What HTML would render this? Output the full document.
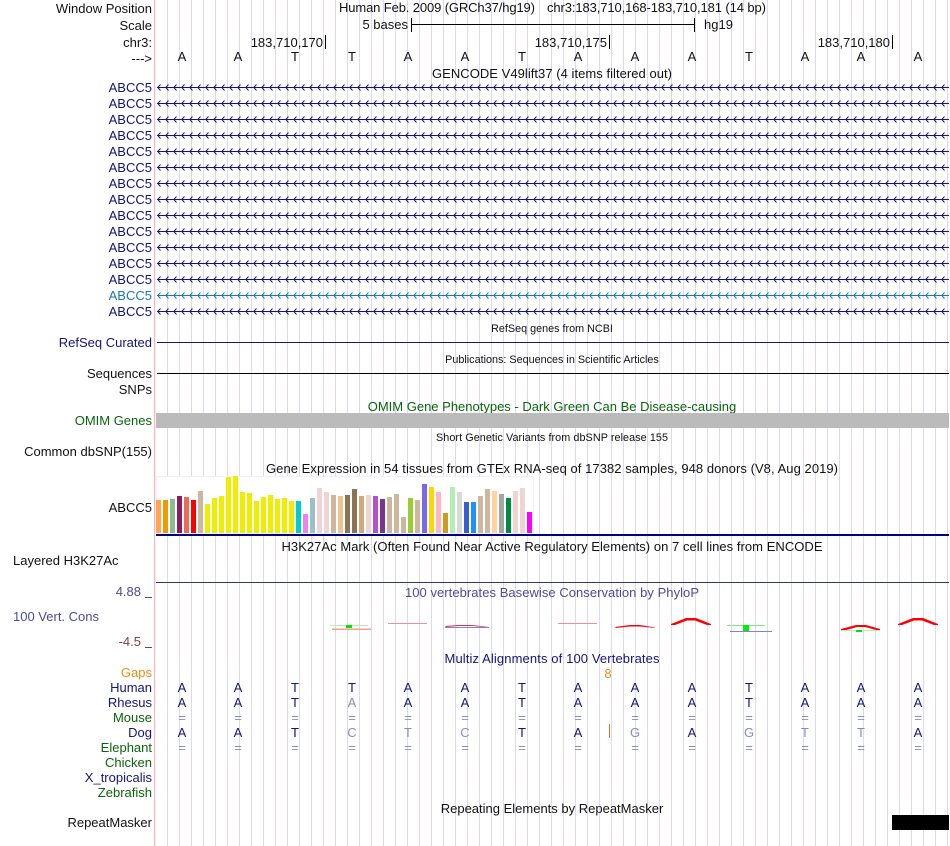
<!DOCTYPE html>
<html><head><meta charset="utf-8"><style>
html,body{margin:0;padding:0;background:#fff;width:950px;height:846px;overflow:hidden}
svg{display:block;font-family:"Liberation Sans",sans-serif;font-size:13px}
.r{text-anchor:end}.m{text-anchor:middle}
.n{fill:#14147f}.g{fill:#0a640a}.k{fill:#111}
.s{font-size:10.8px}
.b text{text-anchor:middle}
.l{fill:#8a8ac2}
.p{fill:#4b4b99}
</style></head><body>
<svg width="950" height="846" viewBox="0 0 950 846" xmlns="http://www.w3.org/2000/svg">
<defs>
<pattern id="arN" x="157" y="84" width="8" height="16" patternUnits="userSpaceOnUse"><path d="M3.5 0.5L0.8 3.5L3.5 6.5" fill="none" stroke="#14147f" stroke-width="1"/></pattern>
<pattern id="arB" x="157" y="292" width="8" height="16" patternUnits="userSpaceOnUse"><path d="M3.5 0.5L0.8 3.5L3.5 6.5" fill="none" stroke="#1a78b4" stroke-width="1"/></pattern>
</defs>
<line x1="167" x2="950" y1="423" y2="423" stroke="#d9d9f8" stroke-width="846" stroke-dasharray="1 11"/>
<rect x="154" width="1" height="846" fill="#ffb0b0"/>

<g class="k">
<text x="152" y="13" class="r">Window Position</text>
<text x="152" y="30" class="r">Scale</text>
<text x="152" y="47" class="r">chr3:</text>
<text x="152" y="63" class="r">---&gt;</text>
<text x="339" y="12" textLength="196">Human Feb. 2009 (GRCh37/hg19)</text>
<text x="547" y="12" textLength="219">chr3:183,710,168-183,710,181 (14 bp)</text>
<text x="408" y="29" class="r">5 bases</text>
<text x="704" y="29">hg19</text>
<text x="323" y="47" class="r">183,710,170</text>
<text x="607" y="47" class="r">183,710,175</text>
<text x="890" y="47" class="r">183,710,180</text>
<text x="552" y="78" class="m" textLength="240">GENCODE V49lift37 (4 items filtered out)</text>
</g>
<g fill="#000">
<rect x="411" y="18" width="1" height="14"/><rect x="412" y="24" width="282" height="1"/><rect x="694" y="18" width="1" height="14"/>
<rect x="325" y="35" width="1" height="14"/><rect x="609" y="35" width="1" height="14"/><rect x="892" y="35" width="1" height="14"/>
</g>
<g class="b k">
<text x="182" y="61">A</text><text x="238" y="61">A</text><text x="295" y="61">T</text><text x="352" y="61">T</text><text x="408" y="61">A</text><text x="465" y="61">A</text><text x="522" y="61">T</text><text x="578" y="61">A</text><text x="635" y="61">A</text><text x="692" y="61">A</text><text x="749" y="61">T</text><text x="805" y="61">A</text><text x="861" y="61">A</text><text x="918" y="61">A</text>
</g>

<g class="n">
<text x="152" y="92" class="r">ABCC5</text><text x="152" y="108" class="r">ABCC5</text><text x="152" y="124" class="r">ABCC5</text><text x="152" y="140" class="r">ABCC5</text><text x="152" y="156" class="r">ABCC5</text><text x="152" y="172" class="r">ABCC5</text><text x="152" y="188" class="r">ABCC5</text><text x="152" y="204" class="r">ABCC5</text><text x="152" y="220" class="r">ABCC5</text><text x="152" y="236" class="r">ABCC5</text><text x="152" y="252" class="r">ABCC5</text><text x="152" y="268" class="r">ABCC5</text><text x="152" y="284" class="r">ABCC5</text>
<text x="152" y="316" class="r">ABCC5</text>
</g>
<text x="152" y="300" class="r" fill="#1a78b4">ABCC5</text>

<rect x="157" y="84" width="792" height="208" fill="url(#arN)"/>
<rect x="157" y="308" width="792" height="7" fill="url(#arN)"/>
<rect x="157" y="292" width="792" height="7" fill="url(#arB)"/>
<g fill="#14147f">
<rect x="157" y="87" width="792" height="1"/><rect x="157" y="103" width="792" height="1"/><rect x="157" y="119" width="792" height="1"/><rect x="157" y="135" width="792" height="1"/><rect x="157" y="151" width="792" height="1"/><rect x="157" y="167" width="792" height="1"/><rect x="157" y="183" width="792" height="1"/><rect x="157" y="199" width="792" height="1"/><rect x="157" y="215" width="792" height="1"/><rect x="157" y="231" width="792" height="1"/><rect x="157" y="247" width="792" height="1"/><rect x="157" y="263" width="792" height="1"/><rect x="157" y="279" width="792" height="1"/><rect x="157" y="311" width="792" height="1"/>
</g>
<rect x="157" y="295" width="792" height="1" fill="#1a78b4"/>

<text x="552" y="332" class="m s k">RefSeq genes from NCBI</text>
<text x="152" y="347" class="r n">RefSeq Curated</text>
<rect x="157" y="342" width="792" height="1" fill="#14147f"/>
<text x="552" y="363" class="m s k">Publications: Sequences in Scientific Articles</text>
<text x="152" y="378" class="r k">Sequences</text>
<rect x="157" y="373" width="792" height="1" fill="#000"/>
<text x="152" y="394" class="r k">SNPs</text>
<text x="552" y="411" class="m g">OMIM Gene Phenotypes - Dark Green Can Be Disease-causing</text>
<text x="152" y="425" class="r g">OMIM Genes</text>
<rect x="156" y="413" width="793" height="15" fill="#bbb"/>
<text x="552" y="441" class="m s k" textLength="232">Short Genetic Variants from dbSNP release 155</text>
<text x="152" y="456" class="r k">Common dbSNP(155)</text>
<text x="552" y="473" class="m k" textLength="572">Gene Expression in 54 tissues from GTEx RNA-seq of 17382 samples, 948 donors (V8, Aug 2019)</text>
<text x="152" y="512" class="r k">ABCC5</text>

<rect x="156.5" y="476.5" width="377" height="57" fill="#fff" stroke="#efeff8"/>
<g>
<rect x="156" y="500" width="5" height="33" fill="#FFA54F"/><rect x="163" y="500" width="5" height="33" fill="#EE9A00"/><rect x="170" y="499" width="5" height="34" fill="#8FBC8F"/><rect x="177" y="496" width="5" height="37" fill="#8B1C62"/><rect x="184" y="497" width="5" height="36" fill="#EE6A50"/><rect x="191" y="500" width="5" height="33" fill="#FF0000"/><rect x="198" y="491" width="5" height="42" fill="#CDB79E"/>
<rect x="205" y="504" width="5" height="29" fill="#EEEE00"/><rect x="212" y="498" width="5" height="35" fill="#EEEE00"/><rect x="219" y="496" width="5" height="37" fill="#EEEE00"/><rect x="226" y="477" width="5" height="56" fill="#EEEE00"/><rect x="233" y="476" width="5" height="57" fill="#EEEE00"/><rect x="240" y="492" width="5" height="41" fill="#EEEE00"/><rect x="247" y="493" width="5" height="40" fill="#EEEE00"/><rect x="254" y="501" width="5" height="32" fill="#EEEE00"/><rect x="261" y="497" width="5" height="36" fill="#EEEE00"/><rect x="268" y="495" width="5" height="38" fill="#EEEE00"/><rect x="275" y="499" width="5" height="34" fill="#EEEE00"/><rect x="282" y="498" width="5" height="35" fill="#EEEE00"/><rect x="289" y="501" width="5" height="32" fill="#EEEE00"/>
<rect x="296" y="501" width="5" height="32" fill="#00CDCD"/><rect x="303" y="514" width="5" height="19" fill="#EE82EE"/><rect x="310" y="498" width="5" height="35" fill="#9AC0CD"/><rect x="317" y="488" width="5" height="45" fill="#EED5D2"/><rect x="324" y="492" width="5" height="41" fill="#EED5D2"/><rect x="331" y="495" width="5" height="38" fill="#CDB79E"/><rect x="338" y="496" width="5" height="37" fill="#EEC591"/><rect x="345" y="495" width="5" height="38" fill="#8B7355"/>
<rect x="352" y="489" width="5" height="44" fill="#8B7355"/><rect x="359" y="496" width="5" height="37" fill="#CDAA7D"/><rect x="366" y="495" width="5" height="38" fill="#EED5D2"/><rect x="373" y="496" width="5" height="37" fill="#B452CD"/><rect x="380" y="499" width="5" height="34" fill="#7D3390"/><rect x="387" y="497" width="5" height="36" fill="#CDB79E"/><rect x="394" y="494" width="5" height="39" fill="#CDB79E"/><rect x="401" y="517" width="5" height="16" fill="#CDB79E"/><rect x="408" y="498" width="5" height="35" fill="#9ACD32"/><rect x="415" y="500" width="5" height="33" fill="#CDB79E"/><rect x="422" y="484" width="5" height="49" fill="#7A67EE"/><rect x="429" y="487" width="5" height="46" fill="#FFD700"/><rect x="436" y="492" width="5" height="41" fill="#FFB6C1"/><rect x="443" y="513" width="5" height="20" fill="#CD9B1D"/><rect x="450" y="487" width="5" height="46" fill="#B4EEB4"/><rect x="457" y="492" width="5" height="41" fill="#D9D9D9"/><rect x="464" y="502" width="5" height="31" fill="#3A5FCD"/><rect x="471" y="502" width="5" height="31" fill="#1E90FF"/><rect x="478" y="496" width="5" height="37" fill="#CDB79E"/><rect x="485" y="489" width="5" height="44" fill="#CDB79E"/><rect x="492" y="491" width="5" height="42" fill="#FFD39B"/><rect x="499" y="494" width="5" height="39" fill="#A6A6A6"/><rect x="506" y="498" width="5" height="35" fill="#008B45"/><rect x="513" y="491" width="5" height="42" fill="#EED5D2"/><rect x="520" y="488" width="5" height="45" fill="#EED5D2"/><rect x="527" y="512" width="5" height="21" fill="#FF00FF"/>
</g>
<rect x="156" y="534" width="793" height="2" fill="#000080"/>

<text x="552" y="551" class="m k" textLength="541">H3K27Ac Mark (Often Found Near Active Regulatory Elements) on 7 cell lines from ENCODE</text>
<text x="13" y="565" class="k">Layered H3K27Ac</text>
<rect x="156" y="582" width="793" height="1" fill="#333366"/>

<text x="141" y="596" class="r p">4.88</text><rect x="145" y="597" width="7" height="1" fill="#4b4b99"/>
<text x="552" y="597" class="m p" textLength="294">100 vertebrates Basewise Conservation by PhyloP</text>
<text x="13" y="621" class="p">100 Vert. Cons</text>
<text x="141" y="646" class="r" fill="#8a3c3c">-4.5</text><rect x="145" y="647" width="7" height="1" fill="#8a3c3c"/>

<!-- phyloP -->
<rect x="330" y="625" width="38" height="1" fill="#b6f0b6"/><rect x="346" y="625" width="6" height="3" fill="#00e600"/><path d="M332 628.5H371V630H332Z" fill="#f4a08a"/>
<rect x="388" y="623" width="39" height="1" fill="#f09090"/>
<path d="M445 626L458 625H472L489 627V627.5L472 626H458L446 627Z" fill="#e83030"/><rect x="445" y="627" width="44" height="1" fill="#8080e0"/>
<rect x="558" y="623" width="39" height="1" fill="#f09090"/>
<path d="M615 627L630 625H640L655 627.5V628L640 626.5H630L616 628Z" fill="#f00"/>
<path d="M671 624L686 618H696L711 624V625H707L695 620.5H687L675 625H671Z" fill="#f00"/>
<rect x="727" y="625" width="38" height="1" fill="#7fe87f"/><rect x="743" y="625" width="6" height="6" fill="#00f000"/><rect x="730" y="631" width="42" height="1" fill="#8080e0"/>
<path d="M841 629L856 625H866L880 629V630H876L865 627H857L846 630H841Z" fill="#f00"/>
<rect x="841" y="630" width="39" height="1" fill="#b6f0b6"/><rect x="856" y="630" width="6" height="2" fill="#00e600"/>
<path d="M898 624L913 618H923L938 624V625H934L922 620.5H914L902 625H898Z" fill="#f00"/>

<text x="552" y="663" class="m n" textLength="215">Multiz Alignments of 100 Vertebrates</text>
<text x="152" y="677" class="r" fill="#f08c14">Gaps</text>
<text x="608" y="678" class="m" fill="#f08c14">8</text>
<rect x="609" y="724" width="1" height="14" fill="#d07818"/>
<g class="n"><text x="152" y="692" class="r">Human</text><text x="152" y="707" class="r">Rhesus</text><text x="152" y="737" class="r">Dog</text><text x="152" y="782" class="r">X_tropicalis</text></g>
<g class="g"><text x="152" y="722" class="r">Mouse</text><text x="152" y="752" class="r">Elephant</text><text x="152" y="767" class="r">Chicken</text><text x="152" y="797" class="r">Zebrafish</text></g>

<g class="b n">
<text x="182" y="692">A</text><text x="238" y="692">A</text><text x="295" y="692">T</text><text x="352" y="692">T</text><text x="408" y="692">A</text><text x="465" y="692">A</text><text x="522" y="692">T</text><text x="578" y="692">A</text><text x="635" y="692">A</text><text x="692" y="692">A</text><text x="749" y="692">T</text><text x="805" y="692">A</text><text x="861" y="692">A</text><text x="918" y="692">A</text>
<text x="182" y="707">A</text><text x="238" y="707">A</text><text x="295" y="707">T</text><text x="408" y="707">A</text><text x="465" y="707">A</text><text x="522" y="707">T</text><text x="578" y="707">A</text><text x="635" y="707">A</text><text x="692" y="707">A</text><text x="749" y="707">T</text><text x="805" y="707">A</text><text x="861" y="707">A</text><text x="918" y="707">A</text>
<text x="182" y="737">A</text><text x="238" y="737">A</text><text x="295" y="737">T</text><text x="522" y="737">T</text><text x="578" y="737">A</text><text x="692" y="737">A</text><text x="918" y="737">A</text>
</g>
<g class="b l">
<text x="352" y="707">A</text>
<text x="352" y="737">C</text><text x="408" y="737">T</text><text x="465" y="737">C</text><text x="635" y="737">G</text><text x="749" y="737">G</text><text x="805" y="737">T</text><text x="861" y="737">T</text>
<text x="182" y="722">=</text><text x="238" y="722">=</text><text x="295" y="722">=</text><text x="352" y="722">=</text><text x="408" y="722">=</text><text x="465" y="722">=</text><text x="522" y="722">=</text><text x="578" y="722">=</text><text x="635" y="722">=</text><text x="692" y="722">=</text><text x="749" y="722">=</text><text x="805" y="722">=</text><text x="861" y="722">=</text><text x="918" y="722">=</text>
<text x="182" y="752">=</text><text x="238" y="752">=</text><text x="295" y="752">=</text><text x="352" y="752">=</text><text x="408" y="752">=</text><text x="465" y="752">=</text><text x="522" y="752">=</text><text x="578" y="752">=</text><text x="635" y="752">=</text><text x="692" y="752">=</text><text x="749" y="752">=</text><text x="805" y="752">=</text><text x="861" y="752">=</text><text x="918" y="752">=</text>
</g>

<text x="552" y="813" class="m k">Repeating Elements by RepeatMasker</text>
<text x="152" y="827" class="r k">RepeatMasker</text>
<rect x="892" y="815" width="57" height="15" fill="#000"/>
</svg>
</body></html>
